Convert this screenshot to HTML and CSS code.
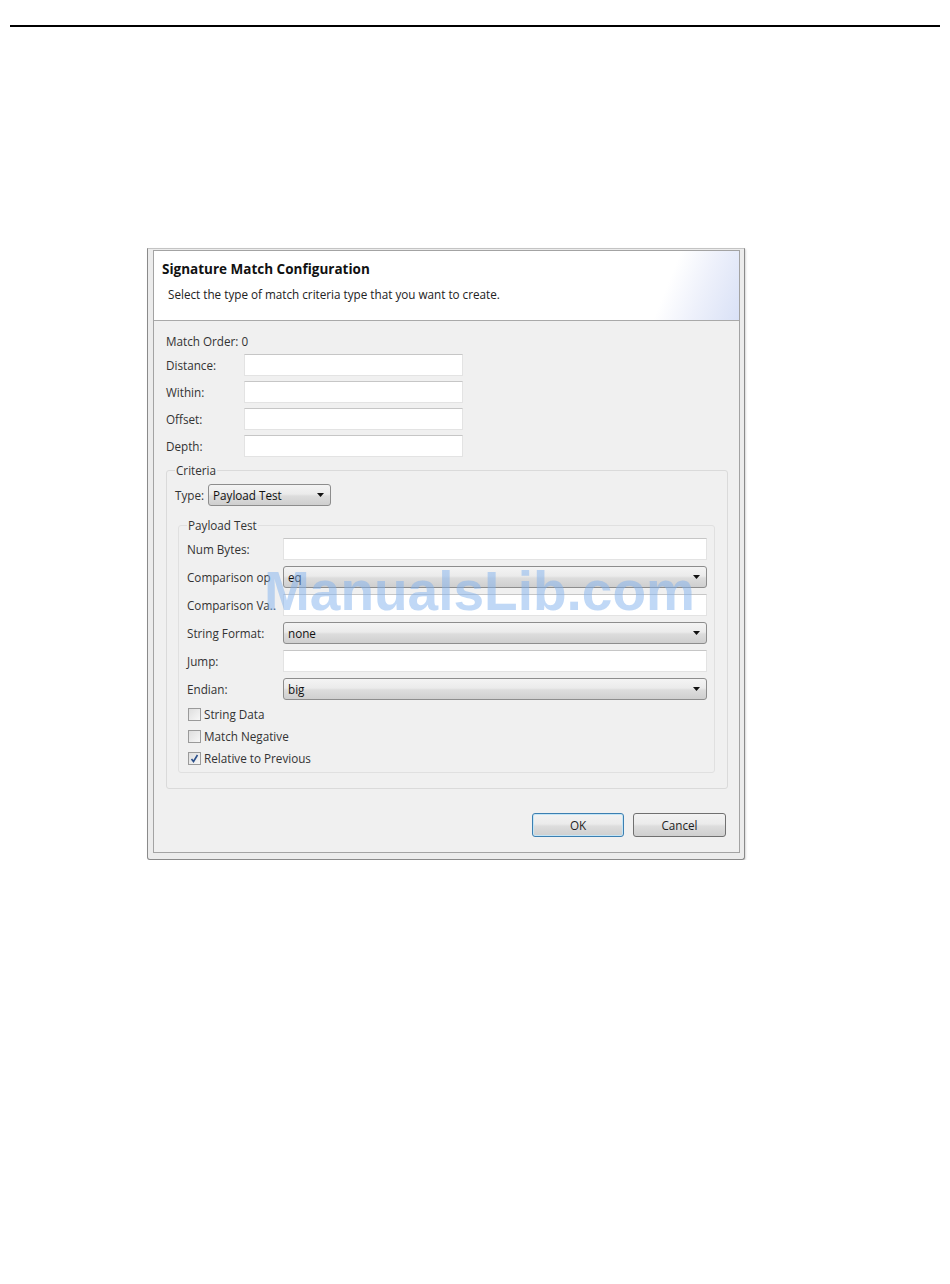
FILE: index.html
```html
<!DOCTYPE html>
<html lang="en">
<head>
    <meta charset="UTF-8">
    <title>Signature Match Configuration</title>
    <link rel="stylesheet" href="styles.css">
</head>
<body>
    <div class="page-rule"></div>

    <div class="dialog">
        <div class="dialog-inner">
            <header class="dialog-head">
                <h1>Signature Match Configuration</h1>
                <p>Select the type of match criteria type that you want to create.</p>
            </header>

            <main class="dialog-body">
                <div class="match-order">Match Order: 0</div>

                <!-- Basic fields -->
                <div class="field-grid">
                    <label for="distance">Distance:</label>
                    <input type="text" id="distance">
                    <label for="within">Within:</label>
                    <input type="text" id="within">
                    <label for="offset">Offset:</label>
                    <input type="text" id="offset">
                    <label for="depth">Depth:</label>
                    <input type="text" id="depth">
                </div>

                <!-- Criteria group -->
                <fieldset class="group criteria">
                    <legend>Criteria</legend>
                    <div class="type-row">
                        <span class="type-label">Type:</span>
                        <div class="combo combo-type">
                            <span>Payload Test</span>
                            <svg class="arrow" width="7" height="4" viewBox="0 0 7 4"><path d="M0 0h7L3.5 4z" fill="#111"/></svg>
                        </div>
                    </div>

                    <fieldset class="group payload">
                        <legend>Payload Test</legend>
                        <div class="payload-grid">
                            <label for="numBytes">Num Bytes:</label>
                            <input type="text" id="numBytes">

                            <span class="row-label clip">Comparison op</span>
                            <div class="combo">
                                <span>eq</span>
                                <svg class="arrow" width="7" height="4" viewBox="0 0 7 4"><path d="M0 0h7L3.5 4z" fill="#111"/></svg>
                            </div>

                            <label for="compValue">Comparison Va..</label>
                            <input type="text" id="compValue">

                            <span class="row-label">String Format:</span>
                            <div class="combo">
                                <span>none</span>
                                <svg class="arrow" width="7" height="4" viewBox="0 0 7 4"><path d="M0 0h7L3.5 4z" fill="#111"/></svg>
                            </div>

                            <label for="jump">Jump:</label>
                            <input type="text" id="jump">

                            <span class="row-label">Endian:</span>
                            <div class="combo">
                                <span>big</span>
                                <svg class="arrow" width="7" height="4" viewBox="0 0 7 4"><path d="M0 0h7L3.5 4z" fill="#111"/></svg>
                            </div>
                        </div>

                        <div class="checks">
                            <div class="check-row"><span class="box"></span>String Data</div>
                            <div class="check-row"><span class="box"></span>Match Negative</div>
                            <div class="check-row">
                                <span class="box">
                                    <svg width="11" height="11" viewBox="0 0 11 11"><path d="M2.5 6l2 2.5L8.5 2" fill="none" stroke="#2a4f8a" stroke-width="1.6"/></svg>
                                </span>Relative to Previous
                            </div>
                        </div>
                    </fieldset>
                </fieldset>

                <div class="buttons">
                    <button class="btn btn-default">OK</button>
                    <button class="btn">Cancel</button>
                </div>
            </main>
        </div>
    </div>

    <div class="watermark">ManualsLib.com</div>
</body>
</html>
```

FILE: styles.css
```css
/* Basic Reset */
html,
body {
    margin: 0;
    padding: 0;
    background: #ffffff;
    font-family: 'Open Sans', 'Liberation Sans', sans-serif;
    font-size: 11.7px;
    color: #1f1f1f;
}

/* Page rule at the top */
.page-rule {
    height: 2px;
    margin: 25px 10px 0 10px;
    background: #000000;
}

/* Window frame */
.dialog {
    width: 598px;
    margin: 221px 0 0 147px;
    box-sizing: border-box;
    padding: 1px 4px 6px 5px;
    border: 1px solid #8a8a8a;
    border-top-color: #c4c4c4;
    background: #ececec;
    border-radius: 0 0 3px 3px;
    box-shadow: 1px 1px 2px rgba(0, 0, 0, 0.15);
}

.dialog-inner {
    border: 1px solid #a3a3a3;
}

/* Header */
.dialog-head {
    height: 70px;
    box-sizing: border-box;
    padding: 10px 8px 0 8px;
    border-bottom: 1px solid #a9a9a9;
    background: linear-gradient(112deg, #ffffff 86%, #eef1fb 92%, #d9e1f6 100%);
}

.dialog-head h1 {
    margin: 0;
    font-size: 13.5px;
    line-height: 17px;
    font-weight: 700;
    color: #111111;
}

.dialog-head p {
    margin: 8px 0 0 6px;
    line-height: 16px;
    color: #222222;
}

/* Body */
.dialog-body {
    background: #f0f0f0;
    padding: 11px 11px 15px 12px;
}

.match-order {
    height: 18px;
    line-height: 18px;
    margin-bottom: 4px;
    color: #333333;
}

.field-grid {
    display: grid;
    grid-template-columns: 78px 219px;
    row-gap: 5px;
    align-items: center;
}

label,
.row-label,
.type-label {
    color: #333333;
    white-space: nowrap;
}

input {
    height: 22px;
    box-sizing: border-box;
    margin: 0;
    padding: 0 4px;
    border: 1px solid #e3e3e3;
    border-top-color: #c6c6c6;
    background: #ffffff;
    font: inherit;
    outline: none;
}

/* Group boxes */
.group {
    margin: 0;
    border: 1px solid #dadada;
    border-radius: 3px;
    min-width: 0;
}

.group legend {
    padding: 0 1px;
    line-height: 16px;
    color: #333333;
}

.criteria {
    margin-top: 5px;
    padding: 0 8px 15px 8px;
}

.type-row {
    display: flex;
    align-items: center;
    margin-top: 6px;
}

.type-label {
    width: 33px;
}

.payload {
    margin: 11px 4px 0 3px;
    padding: 0 7px 3px 8px;
    border-color: #e0e0e0;
}

.payload-grid {
    display: grid;
    grid-template-columns: 96px 1fr;
    grid-auto-rows: 22px;
    row-gap: 6px;
    align-items: center;
    margin-top: 5px;
}

/* Combo boxes */
.combo {
    height: 22px;
    box-sizing: border-box;
    display: flex;
    align-items: center;
    justify-content: space-between;
    padding: 0 6px 0 4px;
    border: 1px solid #8d8d8d;
    border-radius: 3px;
    background: linear-gradient(#f4f4f4 0%, #ebebeb 45%, #dcdcdc 55%, #cfcfcf 100%);
    color: #111111;
}

.combo-type {
    width: 123px;
}

/* Check boxes */
.checks {
    margin-top: 3px;
}

.check-row {
    display: flex;
    align-items: center;
    height: 22px;
    color: #333333;
}

.box {
    width: 13px;
    height: 13px;
    box-sizing: border-box;
    margin: 0 3px 0 1px;
    border: 1px solid #9a9a9a;
    background: linear-gradient(135deg, #dedede, #f7f7f7);
    display: flex;
    align-items: center;
    justify-content: center;
}

/* Buttons */
.buttons {
    display: flex;
    justify-content: flex-end;
    gap: 9px;
    margin: 24px 2px 0 0;
}

.btn {
    width: 93px;
    height: 24px;
    padding: 0;
    border: 1px solid #707070;
    border-radius: 3px;
    background: linear-gradient(#f3f3f3 0%, #ebebeb 45%, #dddddd 55%, #cfcfcf 100%);
    font: inherit;
    color: #1f1f1f;
}

.btn-default {
    width: 92px;
    border-color: #3c7fb1;
    box-shadow: inset 0 0 0 1px #c4e5f6;
}

/* Scanned-manual watermark over the picture */
.watermark {
    position: absolute;
    left: 264px;
    top: 564px;
    font-family: 'Liberation Sans', Arial, sans-serif;
    font-size: 55px;
    line-height: 55px;
    font-weight: 700;
    color: rgba(130, 178, 238, 0.5);
    white-space: nowrap;
}
```
